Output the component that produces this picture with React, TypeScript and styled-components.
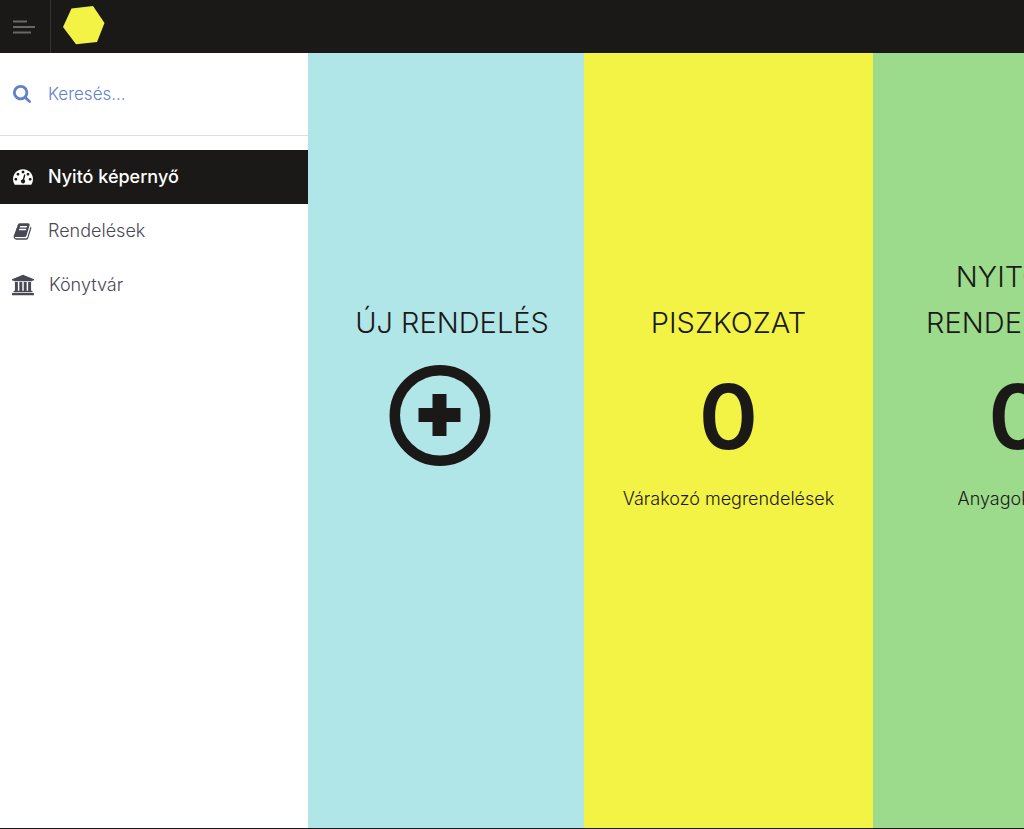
import React from "react";
import styled, { createGlobalStyle } from "styled-components";

const ink = "#1b1918";

const GlobalStyle = createGlobalStyle`
  *, *::before, *::after { box-sizing: border-box; }
  body {
    margin: 0;
    background: #fff;
    color: ${ink};
    font-family: Inter, "Liberation Sans", sans-serif;
    font-size: 18px;
    font-weight: 350;
    line-height: 24px;
  }
`;

const Page = styled.div`
  display: flex;
  flex-direction: column;
  min-height: 100vh;
  border-bottom: 1px solid ${ink};
`;

const TopBar = styled.header`
  display: flex;
  height: 53px;
  background: ${ink};
`;

const MenuButton = styled.button`
  display: flex;
  align-items: center;
  width: 51px;
  padding: 0 0 0 13px;
  border: 0;
  border-right: 1px solid #353332;
  background: none;
  cursor: pointer;
`;

const LogoLink = styled.a`
  display: flex;
  padding: 5px 12px;
`;

const Body = styled.div`
  display: flex;
  flex: 1;
`;

const Sidebar = styled.aside`
  flex: 0 0 308px;
  min-width: 0;
`;

const SearchForm = styled.form`
  display: flex;
  align-items: center;
  gap: 16px;
  height: 83px;
  padding: 0 13px;
  border-bottom: 1px solid #dedee2;
  color: #5f82c8;
`;

const SearchInput = styled.input`
  flex: 1;
  min-width: 0;
  padding: 0;
  border: 0;
  outline: 0;
  background: none;
  color: inherit;
  font: inherit;
  font-size: 17px;
  &::placeholder { color: inherit; opacity: 1; }
`;

const SearchLabel = styled.label`
  display: flex;
  width: 19px;
`;

const Nav = styled.nav`
  display: flex;
  flex-direction: column;
  padding-top: 14px;
`;

const NavItem = styled.a<{ $active?: boolean }>`
  display: flex;
  align-items: center;
  gap: 15px;
  height: 54px;
  padding: 0 12px;
  background: ${(p) => (p.$active ? ink : "transparent")};
  color: ${(p) => (p.$active ? "#fff" : "#484856")};
  font-weight: ${(p) => (p.$active ? 500 : 350)};
  text-decoration: none;
`;

const NavIcon = styled.span`
  display: flex;
  justify-content: center;
  min-width: 21px;
`;

const Panels = styled.main`
  display: flex;
  flex: 1;
  min-width: 0;
  overflow: hidden;
`;

const Panel = styled.section<{ $color: string; $width: number }>`
  display: flex;
  flex: 0 0 ${(p) => p.$width}px;
  flex-direction: column;
  align-items: center;
  justify-content: center;
  padding-bottom: 112px;
  background: ${(p) => p.$color};
  text-align: center;
`;

const CreatePanel = styled(Panel)`
  padding-left: 12px;
`;

const Title = styled.h2`
  display: flex;
  flex-direction: column;
  justify-content: flex-end;
  min-height: 92px;
  margin: 0;
  font-size: 29px;
  font-weight: 350;
  line-height: 46px;
`;

const Figure = styled.div`
  height: 141px;
  font-size: 90px;
  font-weight: 600;
  line-height: 142px;
`;

const Caption = styled.p`
  margin: 0;
  height: 29px;
`;

const AddButton = styled.button`
  display: flex;
  align-items: center;
  height: 138px;
  margin: 0 24px 32px 0;
  padding: 0;
  border: 0;
  background: none;
  color: inherit;
  cursor: pointer;
`;

const icons = {
  search: {
    box: "0 0 1664 1664",
    d: "M1152 704q0-185-131.5-316.5t-316.5-131.5-316.5 131.5-131.5 316.5 131.5 316.5 316.5 131.5 316.5-131.5 131.5-316.5zm512 832q0 52-38 90t-90 38q-54 0-90-38l-343-342q-179 124-399 124-143 0-273.5-55.5t-225-150-150-225-55.5-273.5 55.5-273.5 150-225 225-150 273.5-55.5 273.5 55.5 225 150 150 225 55.5 273.5q0 220-124 399l343 343q37 37 37 90z",
  },
  dashboard: {
    box: "0 64 1792 1792",
    d: "M384 1152q0-53-37.5-90.5t-90.5-37.5-90.5 37.5-37.5 90.5 37.5 90.5 90.5 37.5 90.5-37.5 37.5-90.5zm192-448q0-53-37.5-90.5t-90.5-37.5-90.5 37.5-37.5 90.5 37.5 90.5 90.5 37.5 90.5-37.5 37.5-90.5zm428 481l101-382q6-26-7.5-48.5t-38.5-29.5-48 6.5-30 39.5l-101 382q-60 5-107 43.5t-63 98.5q-20 77 20 146t117 89 146-20 89-117q16-60-6-117t-72-91zm660-33q0-53-37.5-90.5t-90.5-37.5-90.5 37.5-37.5 90.5 37.5 90.5 90.5 37.5 90.5-37.5 37.5-90.5zm-640-640q0-53-37.5-90.5t-90.5-37.5-90.5 37.5-37.5 90.5 37.5 90.5 90.5 37.5 90.5-37.5 37.5-90.5zm448 192q0-53-37.5-90.5t-90.5-37.5-90.5 37.5-37.5 90.5 37.5 90.5 90.5 37.5 90.5-37.5 37.5-90.5zm320 448q0 261-141 483-19 29-54 29h-1402q-35 0-54-29-141-221-141-483 0-182 71-348t191-286 286-191 348-71 348 71 286 191 191 286 71 348z",
  },
  book: {
    box: "0 0 1792 1792",
    d: "M1703 478q40 57 18 129l-275 906q-19 64-76.5 107.5t-122.5 43.5h-923q-77 0-148.5-53.5t-99.5-131.5q-24-67-2-127 0-4 3-27t4-37q1-8-3-21.5t-3-19.5q2-11 8-21t16.5-23.5 16.5-23.5q23-38 45-91.5t30-91.5q3-10 .5-30t-.5-28q3-11 17-28t17-23q21-36 42-92t25-90q1-9-2.5-32t.5-28q4-13 22-30.5t22-22.5q19-26 42.5-84.5t27.5-96.5q1-8-3-25.5t-2-26.5q2-8 9-18t18-23 17-21q8-12 16.5-30.5t15-35 16-36 19.5-32 26.5-23.5 36-11.5 47.5 5.5l-1 3q38-9 51-9h761q74 0 114 56t18 130l-274 906q-36 119-71.5 153.5t-128.5 34.5h-869q-27 0-38 15-11 16-1 43 24 70 144 70h923q29 0 56-15.5t35-41.5l300-987q7-22 5-57 38 15 59 43zm-1064 2q-4 13 2 22.5t20 9.5h608q13 0 25.5-9.5t16.5-22.5l21-64q4-13-2-22.5t-20-9.5h-608q-13 0-25.5 9.5t-16.5 22.5zm-83 256q-4 13 2 22.5t20 9.5h608q13 0 25.5-9.5t16.5-22.5l21-64q4-13-2-22.5t-20-9.5h-608q-13 0-25.5 9.5t-16.5 22.5z",
  },
  library: {
    box: "0 0 1920 1792",
    d: "M960 0l960 384v128h-128q0 26-20.5 45t-48.5 19h-1526q-28 0-48.5-19t-20.5-45h-128v-128zM256 640h256v768h128v-768h256v768h128v-768h256v768h128v-768h256v768h59q28 0 48.5 19t20.5 45v64h-1664v-64q0-26 20.5-45t48.5-19h59v-768zM1851 1600q28 0 48.5 19t20.5 45v128h-1920v-128q0-26 20.5-45t48.5-19h1782z",
  },
};

function Icon({ name, size }: { name: keyof typeof icons; size: number }) {
  const { box, d } = icons[name];
  return (
    <svg width={size} height={size} viewBox={box} fill="currentColor" aria-hidden="true">
      <path d={d} />
    </svg>
  );
}

export default function App() {
  return (
    <Page>
      <GlobalStyle />
      <TopBar>
        <MenuButton type="button" aria-label="Menü">
          <svg width="23" height="14" viewBox="0 0 23 14" stroke="#6a6867" strokeWidth="1.800">
            <path d="M0 1.500H14M0 7H22M0 12.500H18" />
          </svg>
        </MenuButton>
        <LogoLink href="#" aria-label="Kezdőlap">
          <svg width="42" height="40" viewBox="0 0 42 40">
            <path d="M8.500 3.500L30 1L41.500 18L34 37L13 39.300L0 22Z" fill="#f3f346" />
          </svg>
        </LogoLink>
      </TopBar>
      <Body>
        <Sidebar>
          <SearchForm role="search">
            <SearchLabel htmlFor="search" aria-label="Keresés">
              <Icon name="search" size={18} />
            </SearchLabel>
            <SearchInput id="search" type="text" placeholder="Keresés..." />
          </SearchForm>
          <Nav>
            <NavItem href="#" $active aria-current="page">
              <NavIcon>
                <Icon name="dashboard" size={20} />
              </NavIcon>
              Nyitó képernyő
            </NavItem>
            <NavItem href="#">
              <NavIcon>
                <Icon name="book" size={19} />
              </NavIcon>
              Rendelések
            </NavItem>
            <NavItem href="#">
              <NavIcon>
                <Icon name="library" size={22} />
              </NavIcon>
              Könytvár
            </NavItem>
          </Nav>
        </Sidebar>
        <Panels>
          <CreatePanel $color="#b0e6e8" $width={276}>
            <Title>ÚJ RENDELÉS</Title>
            <AddButton type="button" aria-label="Új rendelés">
              <svg width="102" height="102" viewBox="0 0 102 102">
                <circle cx="51" cy="51.500" r="45.200" fill="none" stroke="currentColor" strokeWidth="10.500" />
                <path d="M43.500 30h14v14h14v14h-14v14h-14v-14h-14v-14h14z" fill="currentColor" />
              </svg>
            </AddButton>
          </CreatePanel>
          <Panel $color="#f3f346" $width={289}>
            <Title>PISZKOZAT</Title>
            <Figure>0</Figure>
            <Caption>Várakozó megrendelések</Caption>
          </Panel>
          <Panel $color="#9bdb8b" $width={290}>
            <Title>
              <span>NYITOTT</span>
              <span>RENDELÉSEK</span>
            </Title>
            <Figure>0</Figure>
            <Caption>Anyagokra vár</Caption>
          </Panel>
        </Panels>
      </Body>
    </Page>
  );
}
